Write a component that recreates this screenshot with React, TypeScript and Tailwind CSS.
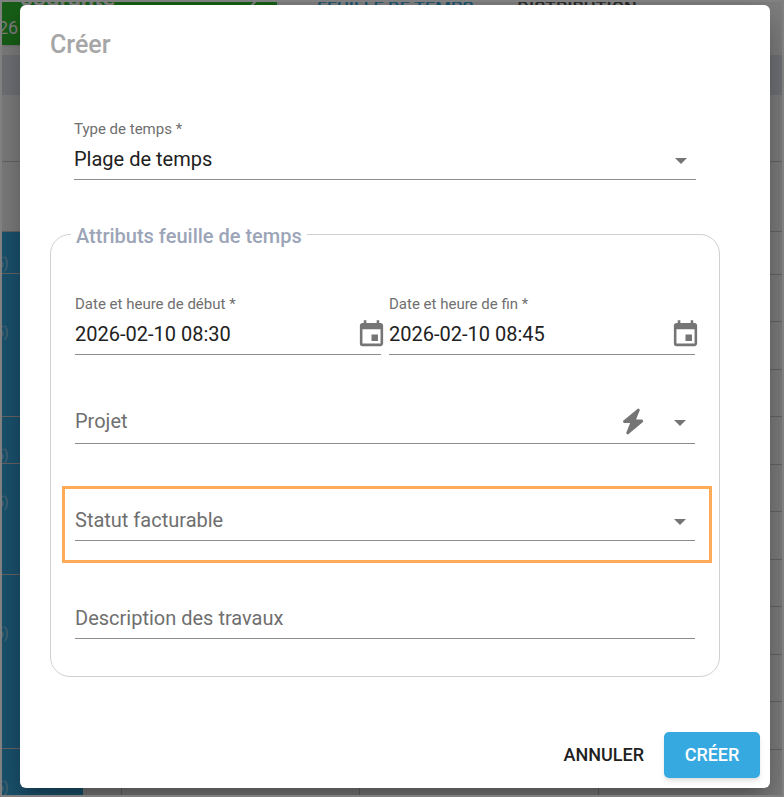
import React, { useState } from "react";
import { MdEvent } from "react-icons/md";

const EVENTS = [
  "h-[42px] pt-[21px]",
  "h-[143px] pt-12",
  "h-[47px] pt-7",
  "h-[111px] pt-7",
  "h-[174px] pt-12",
  "h-[60px] pt-7",
];

const Caret = () => (
  <svg width="12" height="6" viewBox="0 0 12 6" className="pointer-events-none mt-1 shrink-0 fill-[#757575]" aria-hidden="true">
    <path d="M0 0h12L6 6z" />
  </svg>
);

const Bolt = () => (
  <svg width="22" height="28" viewBox="0 0 22 28" className="fill-[#757575] stroke-[#757575]" aria-hidden="true">
    <path d="M16.3 2.300 1.7 14.400 2.2 15.200H9.300L5 26 5.800 26.700 20.400 14.400 20 13.300H12.900L17 2.900z" strokeWidth="1.6" strokeLinejoin="round" />
  </svg>
);

interface DateFieldProps {
  id: string;
  label: string;
  value: string;
  onChange: (value: string) => void;
}

const DateField = ({ id, label, value, onChange }: DateFieldProps) => (
  <div className="min-w-0 flex-1 border-b border-[#8c8c8c]">
    <label htmlFor={id} className="block text-[15px] leading-5 text-[#6f6f6f]">{label}</label>
    <div className="-mr-1.5 flex h-10 items-center">
      <input
        id={id}
        value={value}
        onChange={(e) => onChange(e.target.value)}
        className="min-w-0 flex-1 bg-transparent text-xl text-[#212121] outline-none"
      />
      <button type="button" aria-label="Calendrier" className="shrink-0 text-[#757575]">
        <MdEvent size={31} />
      </button>
    </div>
  </div>
);

// Timesheet page behind the dialog
const Timesheet = () => (
  <div className="flex h-full flex-col overflow-hidden bg-white" aria-hidden="true">
    <div className="flex h-[53px] shrink-0 items-start">
      <div className="h-[43px] w-[275px] overflow-hidden bg-[#30c030] text-white shadow">
        <div className="-mt-4 ml-[18px] flex h-6 items-end justify-between pr-5 text-2xl font-bold leading-6">
          courante
          <svg width="10" height="16" viewBox="0 0 10 16" className="fill-none stroke-white">
            <path d="M1 1 8 8 1 15" strokeWidth="2" />
          </svg>
        </div>
        <div className="-ml-1 mt-1 text-lg leading-7">26</div>
      </div>
      <div className="-mt-1 ml-10 flex gap-11 text-lg font-medium leading-5">
        <span className="text-[#36a9e1]">FEUILLE DE TEMPS</span>
        <span className="text-[#555555]">DISTRIBUTION</span>
      </div>
    </div>
    <div className="h-10 shrink-0 bg-[#e4e9f3]" />
    <div className="h-[67px] shrink-0 border-b border-[#cccccc]" />
    <div className="h-[70px] shrink-0 border-b border-[#cccccc]" />
    <div className="flex min-h-0 flex-1 overflow-hidden">
      <div className="w-[81px] shrink-0 bg-[#36a9e1]">
        {EVENTS.map((size, i) => (
          <div key={i} className={`${size} overflow-hidden border-b border-[#d6cfc8]`}>
            <span className="-ml-1.5 block text-sm text-white/50">5)</span>
          </div>
        ))}
      </div>
      <div className="grid flex-1 grid-cols-[39px_238px_239px_1fr] divide-x divide-[#cccccc]">
        {[0, 1, 2, 3].map((col) => (
          <div key={col}>
            <div className="h-[43px] border-b border-[#cccccc]" />
            {Array.from({ length: 10 }, (_, row) => (
              <div key={row} className="h-12 border-b border-[#cccccc] even:h-[47px]" />
            ))}
          </div>
        ))}
      </div>
    </div>
  </div>
);

const App = () => {
  const [type, setType] = useState("Plage de temps");
  const [start, setStart] = useState("2026-02-10 08:30");
  const [end, setEnd] = useState("2026-02-10 08:45");

  return (
    <div className="relative h-screen overflow-hidden border-2 border-[#808080] font-['Roboto',sans-serif]">
      <Timesheet />
      <div className="absolute inset-0 bg-black/50 pl-[18px] pr-3 pt-[3px]">
        <form
          role="dialog"
          aria-labelledby="dialog-title"
          onSubmit={(e) => e.preventDefault()}
          className="rounded-md bg-white shadow-[0_11px_15px_-7px_rgba(0,0,0,0.2),0_24px_38px_3px_rgba(0,0,0,0.14),0_9px_46px_8px_rgba(0,0,0,0.12)]"
        >
          <h2 id="dialog-title" className="px-[30px] pt-6 text-[25px] font-medium leading-8 text-[#a6a6a6]">Créer</h2>

          <div className="pl-[30px] pr-[50px] pt-[58px]">
            <div className="mx-6 border-b border-[#8c8c8c]">
              <label htmlFor="type" className="block text-[15px] leading-5 text-[#6f6f6f]">Type de temps *</label>
              <div className="flex h-10 items-center pr-[9px]">
                <select
                  id="type"
                  value={type}
                  onChange={(e) => setType(e.target.value)}
                  className="min-w-0 flex-1 appearance-none bg-transparent text-xl text-[#212121] outline-none"
                >
                  <option>Plage de temps</option>
                </select>
                <Caret />
              </div>
            </div>

            <fieldset className="mt-10 rounded-[20px] border border-[#d0d0d0] pb-[37px]">
              <legend className="ml-5 px-[5px] pt-1 text-xl font-medium leading-6 text-[#9ca5b8]">Attributs feuille de temps</legend>

              <div className="mx-6 mt-[46px] flex gap-2">
                <DateField id="start" label="Date et heure de début *" value={start} onChange={setStart} />
                <DateField id="end" label="Date et heure de fin *" value={end} onChange={setEnd} />
              </div>

              <div className="mx-6 mt-11 flex h-[45px] items-center border-b border-[#8c8c8c] pr-[9px]">
                <label htmlFor="project" className="text-xl text-[#6f6f6f]">Projet</label>
                <select id="project" className="min-w-0 flex-1 appearance-none bg-transparent text-xl outline-none" />
                <button type="button" aria-label="Sélection rapide" className="mr-[30px]"><Bolt /></button>
                <Caret />
              </div>

              <div className="ml-[11px] mr-[7px] mt-[42px] border-[3px] border-[#ffab57] pb-[19px] pl-[10px] pr-[14px] pt-[10px]">
                <div className="flex h-[42px] items-center border-b border-[#8c8c8c] pr-[9px]">
                  <label htmlFor="billing" className="text-xl text-[#6f6f6f]">Statut facturable</label>
                  <select id="billing" className="min-w-0 flex-1 appearance-none bg-transparent text-xl outline-none" />
                  <Caret />
                </div>
              </div>

              <div className="mx-6 mt-[34px] flex h-[42px] items-center border-b border-[#8c8c8c]">
                <label htmlFor="description" className="text-xl text-[#6f6f6f]">Description des travaux</label>
                <input id="description" className="min-w-0 flex-1 bg-transparent text-xl outline-none" />
              </div>
            </fieldset>
          </div>

          <div className="flex justify-end gap-2 px-[10px] pb-[10px] pt-[55px] text-lg font-medium">
            <button type="button" className="h-[46px] px-3 text-[#212121]">ANNULER</button>
            <button type="submit" className="h-[46px] min-w-24 rounded-[5px] bg-[#36a9e1] px-5 text-white shadow-md">CRÉER</button>
          </div>
        </form>
      </div>
    </div>
  );
};

export default App;
